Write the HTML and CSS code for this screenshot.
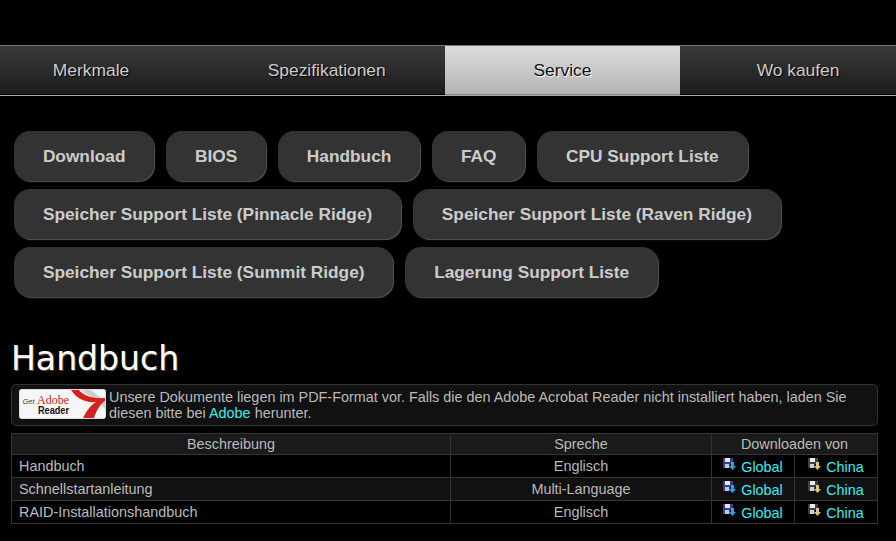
FILE: index.html
```html
<!DOCTYPE html>
<html lang="de">
<head>
    <meta charset="UTF-8">
    <meta name="viewport" content="width=device-width, initial-scale=1.0">
    <title>Handbuch</title>
    <link rel="stylesheet" href="styles.css">
</head>
<body>
    <!-- Hauptnavigation -->
    <nav class="tabs">
        <a class="tab" href="#">Merkmale</a>
        <a class="tab" href="#">Spezifikationen</a>
        <a class="tab active" href="#">Service</a>
        <a class="tab" href="#">Wo kaufen</a>
    </nav>

    <!-- Support Kategorien -->
    <div class="pills">
        <a class="pill" href="#">Download</a>
        <a class="pill" href="#">BIOS</a>
        <a class="pill" href="#">Handbuch</a>
        <a class="pill" href="#">FAQ</a>
        <a class="pill" href="#">CPU Support Liste</a>
        <a class="pill" href="#">Speicher Support Liste (Pinnacle Ridge)</a>
        <a class="pill" href="#">Speicher Support Liste (Raven Ridge)</a>
        <a class="pill" href="#">Speicher Support Liste (Summit Ridge)</a>
        <a class="pill" href="#">Lagerung Support Liste</a>
    </div>

    <div class="content">
        <h1>Handbuch</h1>

        <div class="notice">
            <svg class="adobe" width="87" height="30" viewBox="0 0 87 30">
                <rect x="0.5" y="0.5" width="86" height="29" rx="2" fill="#f6f6f6" stroke="#ddd"/>
                <path d="M62 1 H72 L86 12 V20 L80 14 Z" fill="#cfcfcf"/>
                <path d="M52 1 H60 C64 6 72 10 86 9 V12 C82 14 78 20 75 29 H64 C68 21 72 16 77 13 C66 14 57 9 52 1 Z" fill="#d8201f"/>
                <text class="adobe-get" x="3.5" y="15">Get</text>
                <text class="adobe-name" x="18" y="15">Adobe</text>
                <text class="adobe-reader" x="19" y="25" textLength="31" lengthAdjust="spacingAndGlyphs">Reader</text>
            </svg>
            <p>Unsere Dokumente liegen im PDF-Format vor. Falls die den Adobe Acrobat Reader nicht installiert haben, laden Sie diesen bitte bei <a href="#">Adobe</a> herunter.</p>
        </div>

        <table class="docs">
            <colgroup>
                <col class="col-desc">
                <col class="col-lang">
                <col class="col-global">
                <col class="col-china">
            </colgroup>
            <thead>
                <tr>
                    <th>Beschreibung</th>
                    <th>Spreche</th>
                    <th colspan="2">Downloaden von</th>
                </tr>
            </thead>
            <tbody>
                <tr>
                    <td>Handbuch</td>
                    <td class="center">Englisch</td>
                    <td class="center"><a href="#"><svg class="dl" width="13" height="13" viewBox="0 0 13 13"><use href="#dl-blue"/></svg>Global</a></td>
                    <td class="center"><a href="#"><svg class="dl" width="13" height="13" viewBox="0 0 13 13"><use href="#dl-yellow"/></svg>China</a></td>
                </tr>
                <tr>
                    <td>Schnellstartanleitung</td>
                    <td class="center">Multi-Language</td>
                    <td class="center"><a href="#"><svg class="dl" width="13" height="13" viewBox="0 0 13 13"><use href="#dl-blue"/></svg>Global</a></td>
                    <td class="center"><a href="#"><svg class="dl" width="13" height="13" viewBox="0 0 13 13"><use href="#dl-yellow"/></svg>China</a></td>
                </tr>
                <tr>
                    <td>RAID-Installationshandbuch</td>
                    <td class="center">Englisch</td>
                    <td class="center"><a href="#"><svg class="dl" width="13" height="13" viewBox="0 0 13 13"><use href="#dl-blue"/></svg>Global</a></td>
                    <td class="center"><a href="#"><svg class="dl" width="13" height="13" viewBox="0 0 13 13"><use href="#dl-yellow"/></svg>China</a></td>
                </tr>
            </tbody>
        </table>
    </div>

    <!-- Symbole fuer die Download Links -->
    <svg class="sprite" width="0" height="0">
        <symbol id="dl-blue" viewBox="0 0 13 13">
            <path d="M0 0 H10 V6 H7 V10 H0 Z" fill="#3a3f8c"/>
            <rect x="2" y="0" width="5" height="4" fill="#e8e8f0"/>
            <rect x="2" y="6" width="4" height="4" fill="#c8c8d8"/>
            <path d="M8 4 H11 V8 H13 L9.5 12 L6 8 H8 Z" fill="#27a4ee"/>
        </symbol>
        <symbol id="dl-yellow" viewBox="0 0 13 13">
            <path d="M0 0 H10 V6 H7 V10 H0 Z" fill="#3f4048"/>
            <rect x="2" y="0" width="5" height="4" fill="#ececec"/>
            <rect x="2" y="6" width="4" height="4" fill="#d0d0d0"/>
            <path d="M8 4 H11 V8 H13 L9.5 12 L6 8 H8 Z" fill="#d8c878"/>
        </symbol>
    </svg>
</body>
</html>
```

FILE: styles.css
```css
/* Global */
body {
    margin: 0;
    background: #000;
    color: #bbb;
    font-family: "Liberation Sans", Arial, sans-serif;
    font-size: 14.4px;
    overflow: hidden;
}

a {
    text-decoration: none;
}

/* Navigation */
.tabs {
    display: flex;
    margin: 45px 0 0 -26.8px;
    width: 942.7px;
    height: 48px;
    padding-bottom: 1px;
    border-top: 1px solid #777;
    border-bottom: 1px solid #aaa;
}

.tab {
    flex: 1;
    display: flex;
    align-items: center;
    justify-content: center;
    background: linear-gradient(#3a3a3a, #1c1c1c);
    color: #ccc;
    font-size: 17.4px;
    text-shadow: 1px 1px 1px #000;
}

.tab.active {
    background: linear-gradient(#dcdcdc, #b4b4b4);
    box-shadow: 0 1px #888;
    color: #111;
    text-shadow: 1px 1px 1px #fff;
}

/* Kategorien */
.pills {
    display: flex;
    flex-wrap: wrap;
    gap: 8px 11.8px;
    padding: 35px 14px 0;
}

.pill {
    box-sizing: border-box;
    height: 50px;
    line-height: 51px;
    padding: 0 28.9px;
    background: #333;
    border-radius: 16px;
    box-shadow: 1px 1px 1px #555;
    color: #ccc;
    font-size: 17.3px;
    font-weight: bold;
}

/* Inhalt */
.content {
    padding: 0 18px 0 11px;
}

h1 {
    margin: 42px 0 5px;
    color: #fff;
    font-family: "DejaVu Sans", sans-serif;
    font-size: 33.1px;
    font-weight: normal;
    line-height: 40px;
    text-shadow: 1px 1px 1px #753;
}

.notice {
    display: flex;
    align-items: center;
    box-sizing: border-box;
    height: 42px;
    padding: 0 7px;
    background: #111;
    border: 1px solid #333;
    border-radius: 5px;
}

.notice p {
    margin: 0 0 0 3px;
    line-height: 16px;
}

.notice a,
.docs a {
    color: #33f0f0;
}

.adobe {
    flex: none;
    margin-bottom: 2px;
}

.adobe-get {
    fill: #444;
    font-family: "Liberation Sans", sans-serif;
    font-size: 7.5px;
    font-style: italic;
}

.adobe-name {
    fill: #c8262a;
    font-family: "Liberation Serif", serif;
    font-size: 12px;
}

.adobe-reader {
    fill: #111;
    font-family: "Liberation Sans", sans-serif;
    font-size: 11px;
    font-weight: bold;
}

/* Tabelle */
.docs {
    width: 867px;
    margin-top: 7px;
    border-collapse: collapse;
    table-layout: fixed;
}

.col-desc { width: 439px; }
.col-lang { width: 261px; }
.col-global { width: 83px; }

.docs th,
.docs td {
    height: 22px;
    padding: 0 7px;
    border: 1px solid #333;
    line-height: 16px;
}

.docs th {
    height: 20px;
    background: #1a1a1a;
    font-weight: normal;
}

.docs tbody tr:nth-child(even) {
    background: #111;
}

.center {
    text-align: center;
}

.dl {
    margin-right: 5px;
    vertical-align: 1px;
}

.sprite {
    position: absolute;
}
```
